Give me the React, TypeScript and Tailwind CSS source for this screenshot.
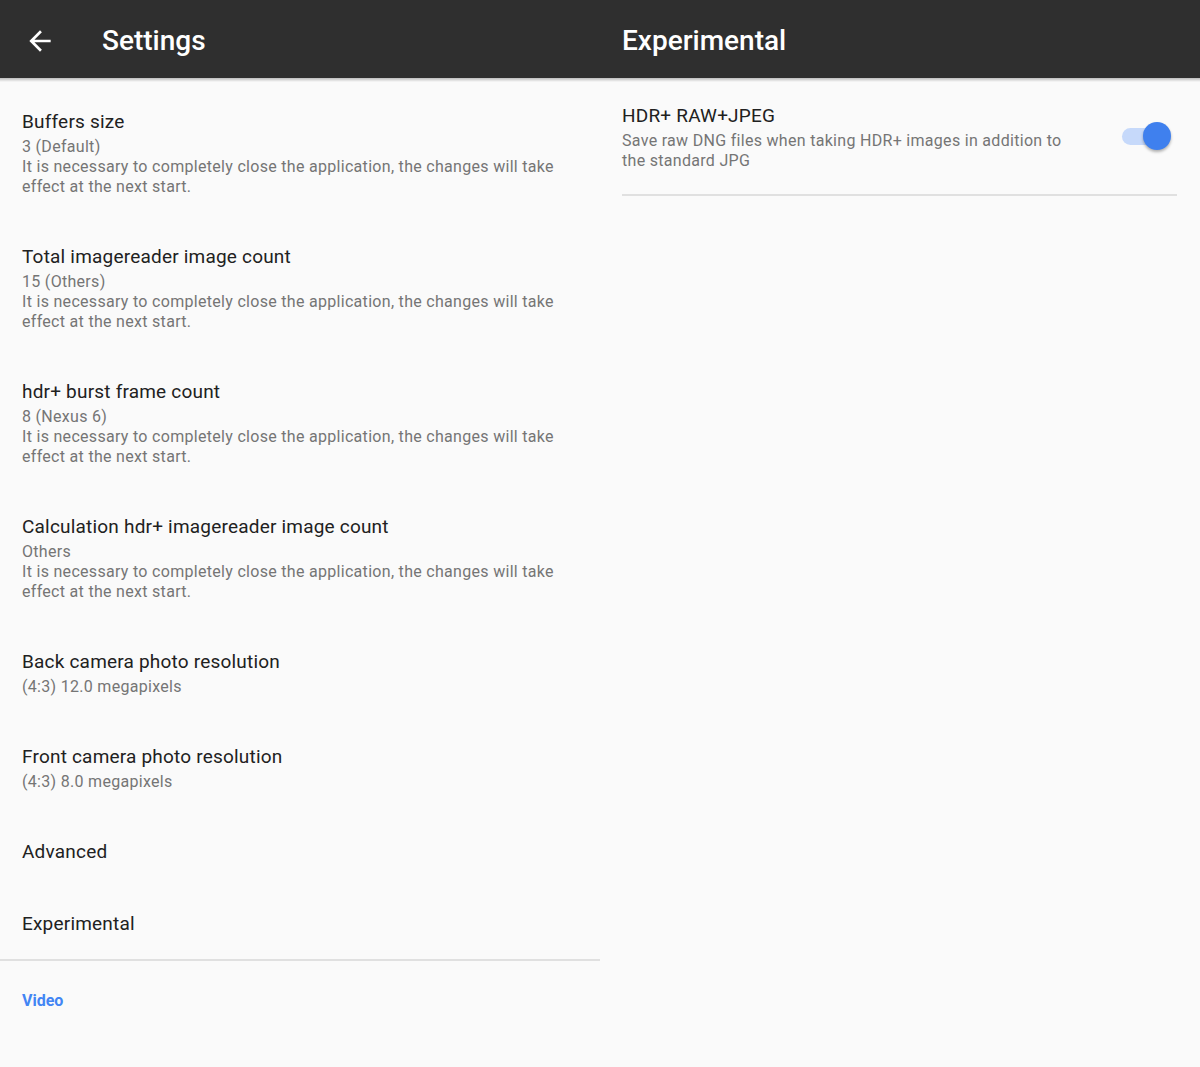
import React from 'react'

type Pref = { title: string; lines?: string[] }

const restart = 'It is necessary to completely close the application, the changes will take effect at the next start.'

const prefs: Pref[] = [
    { title: 'Buffers size', lines: ['3 (Default)', restart] },
    { title: 'Total imagereader image count', lines: ['15 (Others)', restart] },
    { title: 'hdr+ burst frame count', lines: ['8 (Nexus 6)', restart] },
    { title: 'Calculation hdr+ imagereader image count', lines: ['Others', restart] },
    { title: 'Back camera photo resolution', lines: ['(4:3) 12.0 megapixels'] },
    { title: 'Front camera photo resolution', lines: ['(4:3) 8.0 megapixels'] },
    { title: 'Advanced' },
    { title: 'Experimental' },
]

function PrefRow({ pref }: { pref: Pref }) {
    return (
        <div className="px-[22px] py-6">
            <div className="text-[19px] leading-[24px] tracking-[0.2px] text-[#212121]">{pref.title}</div>
            {pref.lines && (
                <div className="mt-[3px] max-w-[545px] text-[16px] leading-[20px] tracking-[0.3px] text-[#757575]">
                    {pref.lines.map((l, i) => (
                        <div key={i}>{l}</div>
                    ))}
                </div>
            )}
        </div>
    )
}

function Toolbar({ title, back }: { title: string; back?: boolean }) {
    return (
        <div className="relative z-10 flex h-[78px] items-center bg-[#2f2f2f] pt-[4px]">
            {back && (
                <svg viewBox="0 0 24 24" className="ml-[24px] h-8 w-8 fill-white">
                    <path d="M20 11H7.83l5.59-5.59L12 4l-8 8 8 8 1.41-1.41L7.83 13H20v-2z" />
                </svg>
            )}
            <span className={`${back ? 'ml-[46px]' : 'ml-[22px]'} text-[28px] font-medium text-white`}>{title}</span>
            {/* drop shadow under the app bar */}
            <div className="pointer-events-none absolute left-0 right-0 top-full h-[4px] bg-gradient-to-b from-black/25 to-transparent" />
        </div>
    )
}

export default function App() {
    return (
        <div
            className="flex h-[1067px] w-[1200px] bg-[#fafafa]"
            style={{ fontFamily: 'Roboto, "Liberation Sans", sans-serif' }}
        >
            {/* Settings screen */}
            <div className="flex w-[600px] flex-col">
                <Toolbar title="Settings" back />
                <div className="pt-[8px]">
                    {prefs.map(p => (
                        <PrefRow key={p.title} pref={p} />
                    ))}
                </div>
                <div className="-mt-[1px] border-t-2 border-[#e0e0e0]" />
                <div className="px-[22px] pt-[30px] text-[16px] font-bold leading-[20px] text-[#4285f4]">Video</div>
            </div>

            {/* Experimental screen */}
            <div className="flex w-[600px] flex-col">
                <Toolbar title="Experimental" />
                <div className="ml-[22px] mr-[23px] flex items-start border-b-2 border-[#e0e0e0] pb-[23px] pt-[26px]">
                    <div className="flex-1">
                        <div className="text-[19px] leading-[24px] tracking-[0.2px] text-[#212121]">HDR+ RAW+JPEG</div>
                        <div className="mt-[3px] max-w-[450px] text-[16px] leading-[20px] tracking-[0.3px] text-[#757575]">
                            Save raw DNG files when taking HDR+ images in addition to the standard JPG
                        </div>
                    </div>
                    <div className="relative mr-[6px] mt-[18px] h-[28px] w-[49px]">
                        <div className="absolute left-0 top-[6px] h-[17px] w-[42px] rounded-full bg-[#c6d9fa]" />
                        <div className="absolute right-0 top-0 h-[28px] w-[28px] rounded-full bg-[#3f80ee] shadow-[0_2px_3px_rgba(0,0,0,0.3)]" />
                    </div>
                </div>
            </div>
        </div>
    )
}
